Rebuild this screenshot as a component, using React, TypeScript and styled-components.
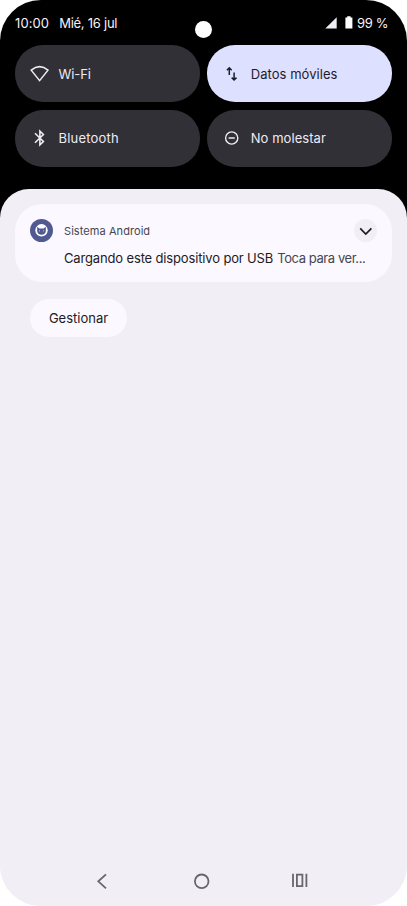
import React from 'react';
import styled, { createGlobalStyle } from 'styled-components';

const TILES = [
  { id: 'wifi', label: 'Wi-Fi', active: false, spacing: -0.1 },
  { id: 'data', label: 'Datos móviles', active: true, spacing: 0.05 },
  { id: 'bluetooth', label: 'Bluetooth', active: false, spacing: 0.2 },
  { id: 'dnd', label: 'No molestar', active: false, spacing: 0.05 },
];

const TileIcon = ({ id }: { id: string }) => {
  switch (id) {
    case 'wifi':
      return (
        <svg width="20" height="18" viewBox="0 0 20 18" fill="none">
          <path
            d="M1.2 5.1Q9.6 -1.8 18 5.1L9.6 15.6Z"
            stroke="currentColor"
            strokeWidth="1.5"
          />
        </svg>
      );
    case 'data':
      return (
        <svg width="20" height="18" viewBox="0 0 20 18" fill="none">
          <path
            d="M7.3 10V3.3M4.9 5.2L7.3 2.8L9.7 5.2M12.1 7.5V14.6M9.7 12.6L12.1 15L14.5 12.6"
            stroke="currentColor"
            strokeWidth="1.5"
          />
        </svg>
      );
    case 'bluetooth':
      return (
        <svg width="20" height="18" viewBox="0 0 20 18" fill="none">
          <path
            d="M5 4.2L13.4 12.5L9.9 15.9V2.1L13.4 5.5L5 13.8"
            stroke="currentColor"
            strokeWidth="1.6"
          />
        </svg>
      );
    default:
      return (
        <svg width="20" height="18" viewBox="0 0 20 18" fill="none">
          <circle cx="9.7" cy="9" r="6.1" stroke="currentColor" strokeWidth="1.4" />
          <path d="M6.6 9H12.8" stroke="currentColor" strokeWidth="1.4" />
        </svg>
      );
  }
};

const App = () => {
  return (
    <>
      <GlobalStyle />
      <Screen>
        <Camera />
        <StatusBar>
          <Text size={13} spacing={0.1}>10:00</Text>
          <DateText size={13} spacing={-0.25}>Mié, 16 jul</DateText>
          <StatusIcons>
            <svg width="12" height="12" viewBox="0 0 12 12">
              <path d="M11.7 0.2V11.5H0.3Z" fill="#f0edf5" />
            </svg>
            <svg width="8" height="13" viewBox="0 0 8 13">
              <path d="M2.2 0.3H5.6V1.5H7.4V12.6H0.4V1.5H2.2Z" fill="#fff" />
            </svg>
            <Text size={13} spacing={-0.4}>99 %</Text>
          </StatusIcons>
        </StatusBar>
        <Tiles>
          {TILES.map(({ id, label, active, spacing }) => {
            return (
              <Tile key={id} $active={active}>
                <TileIcon id={id} />
                <Text size={13} spacing={spacing}>{label}</Text>
              </Tile>
            );
          })}
        </Tiles>
        <Shade>
          <Notification>
            <AppBadge>
              <svg width="23" height="23" viewBox="0 0 23 23" fill="none">
                <circle cx="11.5" cy="11.3" r="6.2" fill="#fff" />
                <path
                  d="M7.2 7.8L9.4 9.5H13.6L15.8 7.8V12.3Q15.3 15.7 11.5 15.8Q7.7 15.7 7.2 12.3Z"
                  fill="#505990"
                />
                <path d="M9 11.9H10M13 11.9H14" stroke="#c5c8e0" />
              </svg>
            </AppBadge>
            <NotificationBody>
              <NotificationHeader>
                <AppName size={11} spacing={0.07}>Sistema Android</AppName>
                <ExpandButton>
                  <svg width="14" height="10" viewBox="0 0 14 10" fill="none">
                    <path d="M1.2 2.4L6.8 8L12.4 2.4" stroke="#1c1b22" strokeWidth="1.7" />
                  </svg>
                </ExpandButton>
              </NotificationHeader>
              <Message>
                <MessageTitle size={13} spacing={-0.15}>
                  Cargando este dispositivo por USB
                </MessageTitle>
                <Text size={13} spacing={-0.42}>Toca para ver...</Text>
              </Message>
            </NotificationBody>
          </Notification>
          <ManageButton>
            <Text size={13} spacing={0}>Gestionar</Text>
          </ManageButton>
          <NavBar>
            <svg width="16" height="18" viewBox="0 0 16 18" fill="none">
              <path d="M12 2.3L4.3 9.3L12 16.3" stroke="#68666d" strokeWidth="1.8" />
            </svg>
            <svg width="18" height="18" viewBox="0 0 18 18" fill="none">
              <circle cx="9.7" cy="9.3" r="6.8" stroke="#68666d" strokeWidth="1.8" />
            </svg>
            <svg width="18" height="18" viewBox="0 0 18 18" fill="none">
              <path
                d="M2 1.8V15M15.4 1.8V15M5.9 2.7H11.4V14.1H5.9Z"
                stroke="#68666d"
                strokeWidth="1.8"
              />
            </svg>
          </NavBar>
        </Shade>
      </Screen>
    </>
  );
};

export default App;

const GlobalStyle = createGlobalStyle`
  * {
    box-sizing: border-box;
  }

  body {
    margin: 0;
    background: #fff;
    font-family: Inter, 'Open Sans', sans-serif;
  }

  svg {
    display: block;
    flex-shrink: 0;
  }

  button {
    padding: 0;
    border: 0;
    font-family: inherit;
  }
`;

const Screen = styled.div`
  position: relative;
  display: flex;
  flex-direction: column;
  width: 407px;
  height: 906px;
  overflow: hidden;
  border-radius: 41px;
  background: linear-gradient(#000 300px, #f1eef5 300px);
`;

const Camera = styled.div`
  position: absolute;
  top: 21px;
  left: 195px;
  width: 17px;
  height: 17px;
  border-radius: 50%;
  background: #fff;
`;

const Text = styled.span<{ size: number; spacing: number }>`
  font-size: ${({ size }) => size}px;
  letter-spacing: ${({ spacing }) => spacing}px;
  line-height: 16px;
  white-space: nowrap;
`;

const StatusBar = styled.header`
  display: flex;
  align-items: center;
  height: 45px;
  padding: 0 19px 0 15px;
  color: #f5f3fa;
`;

const DateText = styled(Text)`
  margin-left: 10px;
`;

const StatusIcons = styled.div`
  display: flex;
  align-items: center;
  margin-left: auto;

  svg + svg {
    margin: 0 4px 0 8px;
  }
`;

const Tiles = styled.section`
  display: grid;
  grid-template-columns: 1fr 1fr;
  gap: 7.5px;
  padding: 0 15px;
`;

const Tile = styled.button<{ $active: boolean }>`
  display: flex;
  align-items: center;
  gap: 8.5px;
  height: 57px;
  padding-left: 15px;
  border-radius: 28px;
  color: ${({ $active }) => ($active ? '#1c1c2c' : '#eeebf3')};
  background: ${({ $active }) => ($active ? '#dee0ff' : '#313036')};
`;

const Shade = styled.main`
  display: flex;
  flex: 1;
  flex-direction: column;
  align-items: flex-start;
  margin-top: 22.5px;
  padding: 15px 15px 0;
  border-radius: 29px 29px 0 0;
  background: #f1eef5;
`;

const Notification = styled.article`
  display: flex;
  gap: 11px;
  width: 100%;
  height: 78px;
  padding: 15px;
  border-radius: 27px;
  background: #fbf8ff;
`;

const AppBadge = styled.div`
  width: 23px;
  height: 23px;
  border-radius: 50%;
  background: #505990;
`;

const NotificationBody = styled.div`
  flex: 1;
  min-width: 0;
`;

const NotificationHeader = styled.div`
  display: flex;
  align-items: center;
  justify-content: space-between;
  color: #47464f;
`;

const AppName = styled(Text)`
  padding-top: 1px;
`;

const ExpandButton = styled.button`
  display: flex;
  align-items: center;
  justify-content: center;
  width: 23px;
  height: 23px;
  border-radius: 50%;
  background: #f1eef5;
`;

const Message = styled.div`
  display: flex;
  gap: 4px;
  margin-top: 8px;
  color: #47464f;
`;

const MessageTitle = styled(Text)`
  color: #1c1b22;
`;

const ManageButton = styled.button`
  width: 97px;
  height: 38px;
  margin: 17px 0 0 15px;
  border-radius: 19px;
  color: #1c1b22;
  background: #fbf8ff;
`;

const NavBar = styled.nav`
  display: flex;
  justify-content: space-between;
  width: 100%;
  margin-top: auto;
  padding: 0 83px 16px 79px;
`;
